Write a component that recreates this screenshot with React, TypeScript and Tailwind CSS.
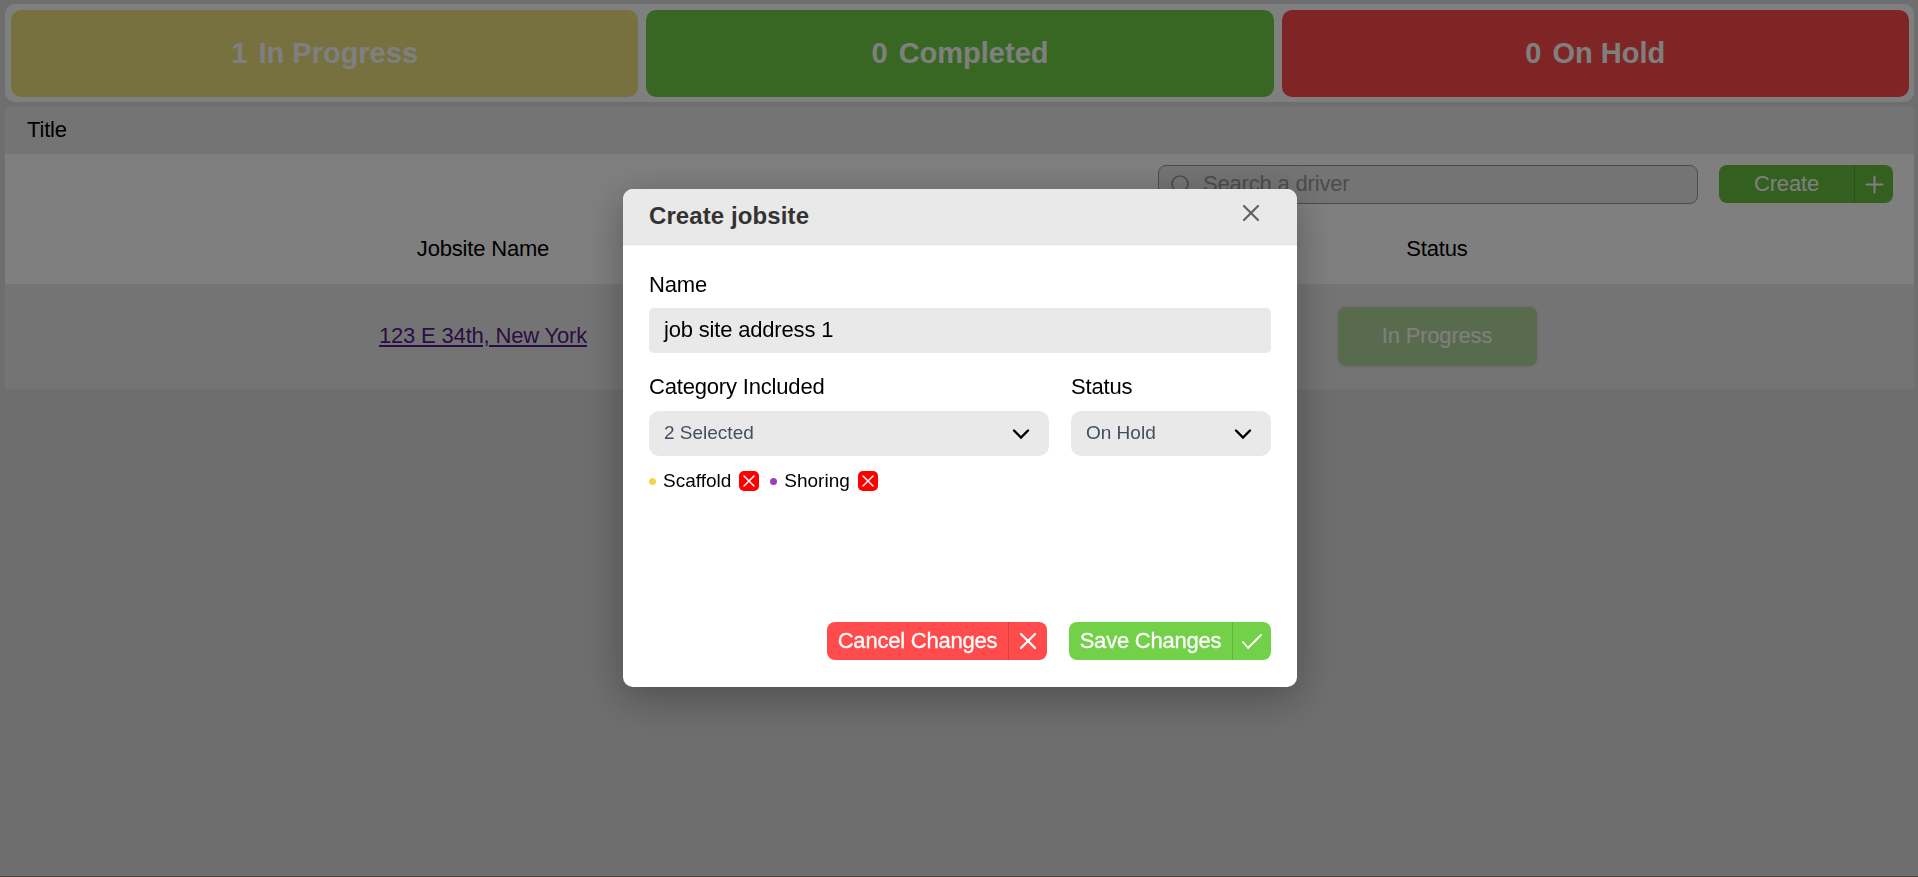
import { X, Plus, Check, Search } from "lucide-react";

const cards = [
  { count: 1, label: "In Progress", color: "bg-[#ede27d]" },
  { count: 0, label: "Completed", color: "bg-[#6fcf45]" },
  { count: 0, label: "On Hold", color: "bg-[#ff4b4b]" },
];

function StatusCards() {
  return (
    <div className="flex h-[98px] gap-2 rounded-[10px] bg-white pt-[6px] pr-[5px] pb-[5px] pl-[6px]">
      {cards.map((c) => (
        <div
          key={c.label}
          className={`flex flex-1 items-center justify-center gap-[11px] rounded-[10px] text-[29px] font-bold text-white ${c.color}`}
        >
          <span>{c.count}</span>
          <span>{c.label}</span>
        </div>
      ))}
    </div>
  );
}

function JobsitePanel() {
  return (
    <div className="mt-1 overflow-hidden rounded-t-lg bg-white text-[22px] tracking-[-0.18px] text-black">
      <div className="flex h-12 items-center bg-[#e9e9e9] pb-[2px] pl-[22px]">Title</div>
      <div className="flex h-[60px] items-start justify-end gap-[21px] pt-[11px] pr-[21px]">
        <div className="flex h-[39px] w-[540px] items-center rounded-lg border border-[#999] bg-[#e9e9e9] pl-[10px] text-[#999]">
          <Search size={24} strokeWidth={1.7} />
          <span className="ml-[10px] -mt-[3px]">Search a driver</span>
        </div>
        <button className="flex h-[38px] w-[174px] overflow-hidden rounded-lg bg-[#68c03f] text-white">
          <span className="flex h-full flex-1 items-center justify-center pb-[2px]">Create</span>
          <span className="flex h-full w-[39px] items-center justify-center border-l border-[#559f33]">
            <Plus size={27} strokeWidth={1.8} />
          </span>
        </button>
      </div>
      <div className="grid h-[70px] grid-cols-2 pl-px text-center leading-[70px]">
        <div>Jobsite Name</div>
        <div>Status</div>
      </div>
      <div className="grid h-[105px] grid-cols-2 items-center justify-items-center bg-[#e9e9e9] pl-px">
        <a className="pb-[2px] text-[#551a8b] underline">123 E 34th, New York</a>
        <div className="flex h-[59px] w-[199px] items-center justify-center rounded-lg bg-[#b1d99b] pb-[2px] text-white shadow-[0_0_3px_rgba(0,0,0,0.15)]">
          In Progress
        </div>
      </div>
    </div>
  );
}

function Chevron() {
  return (
    <svg width="18" height="12" viewBox="0 0 18 12" fill="none">
      <path d="M2 2.5l7 7 7-7" stroke="#000" strokeWidth="2.4" strokeLinecap="round" strokeLinejoin="miter" />
    </svg>
  );
}

function Select({ value }: { value: string }) {
  return (
    <div className="mt-[8px] flex h-[45px] items-center justify-between rounded-[10px] bg-[#e9e9e9] pr-[19px] pl-[15px] text-[19px] tracking-normal text-[#434e61]">
      {value}
      <Chevron />
    </div>
  );
}

function Tag({ name, dot }: { name: string; dot: string }) {
  return (
    <div className="flex items-center">
      <span className={`size-[7px] rounded-full ${dot}`} />
      <span className="ml-[7px]">{name}</span>
      <span className="ml-2 flex size-5 items-center justify-center rounded-[5px] bg-[#ff0000] text-white">
        <X size={22} strokeWidth={1.8} />
      </span>
    </div>
  );
}

function CreateDialog() {
  return (
    <div className="fixed inset-0 flex items-start justify-center bg-black/50 pt-[189px] pl-[2px]">
      <div className="flex h-[498px] w-[674px] flex-col overflow-hidden rounded-[10px] bg-white shadow-[0_10px_40px_rgba(0,0,0,0.3)]">
        <div className="flex h-14 items-center justify-between border-b border-[#e0e0e0] bg-[#e9e9e9] pr-[32px] pl-[26px]">
          <h2 className="-mt-[2px] text-2xl font-bold tracking-[0.1px] text-[#333]">Create jobsite</h2>
          <X size={28} strokeWidth={1.9} className="-mt-[7px] text-[#636363]" />
        </div>
        <div className="flex flex-1 flex-col px-[26px] pt-[23px] pb-[27px] text-[22px] tracking-[-0.18px] text-black">
          <div className="leading-[33px]">Name</div>
          <div className="mt-[7px] flex h-[45px] items-center rounded-[5px] bg-[#e9e9e9] pb-[2px] pl-[15px]">
            job site address 1
          </div>
          <div className="mt-[17px] flex gap-[22px]">
            <div className="w-[400px]">
              <div className="leading-[33px]">Category Included</div>
              <Select value="2 Selected" />
            </div>
            <div className="w-[200px]">
              <div className="leading-[33px]">Status</div>
              <Select value="On Hold" />
            </div>
          </div>
          <div className="mt-[11px] flex gap-[11px] text-[19px] tracking-normal">
            <Tag name="Scaffold" dot="bg-[#efd84e]" />
            <Tag name="Shoring" dot="bg-[#9a3fbe]" />
          </div>
          <div className="mt-auto flex justify-end gap-[22px] tracking-[-0.22px] text-white">
            <button className="flex h-[38px] w-[220px] items-center overflow-hidden rounded-lg bg-[#ff4b4b] [-webkit-text-stroke:0.3px_white]">
              <span className="flex-1 pb-px">Cancel Changes</span>
              <span className="flex h-full w-[39px] items-center justify-center border-l border-[#d94141]">
                <X size={28} strokeWidth={1.9} />
              </span>
            </button>
            <button className="flex h-[38px] w-[202px] items-center overflow-hidden rounded-lg bg-[#72d149] [-webkit-text-stroke:0.3px_white]">
              <span className="flex-1 pb-px">Save Changes</span>
              <span className="flex h-full w-[39px] items-center justify-center border-l border-[#61b23e]">
                <svg width="22" height="17" viewBox="0 0 22 17" fill="none">
                  <path d="M2 9l5 6L20 2" stroke="currentColor" strokeWidth="1.9" strokeLinecap="round" strokeLinejoin="round" />
                </svg>
              </span>
            </button>
          </div>
        </div>
      </div>
    </div>
  );
}

export default function App() {
  return (
    <div className="h-[877px] overflow-hidden border-b border-[#9c8c70] bg-[#dcdcdc] pt-1 pr-1 pl-[5px] font-['Liberation_Sans',Arial,sans-serif]">
      <StatusCards />
      <JobsitePanel />
      <CreateDialog />
    </div>
  );
}
